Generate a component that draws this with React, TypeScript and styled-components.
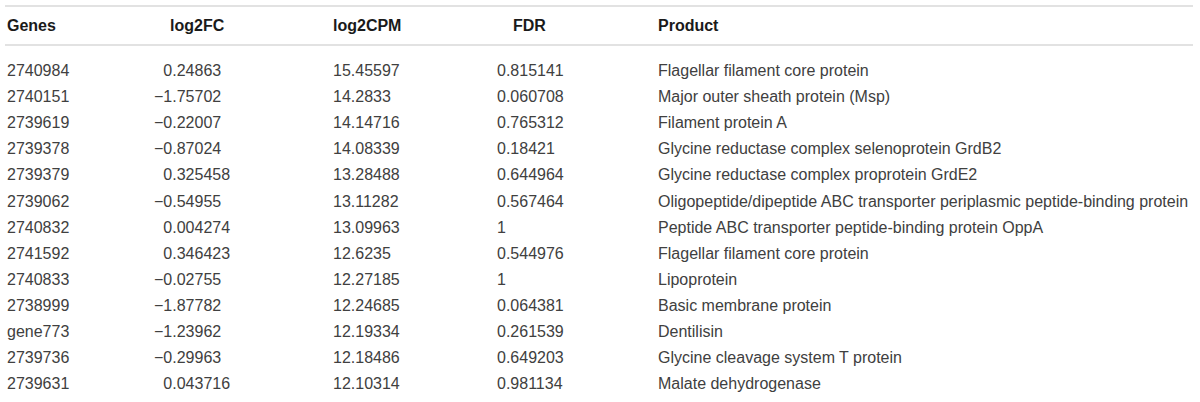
import React from "react";
import styled, { createGlobalStyle } from "styled-components";

const Global = createGlobalStyle`
  html, body { margin: 0; padding: 0; background: #fff; }
  body { font-family: "Liberation Sans", Arial, sans-serif; }
`;

const Page = styled.div`
  padding: 5px 7px 0 5px;
  width: 1188px;
`;

const cols = "135px 180px 160px 160px 1fr";

const HeaderRow = styled.div`
  display: grid;
  grid-template-columns: ${cols};
  height: 37px;
  align-items: center;
  border-top: 2px solid #e2e2e2;
  border-bottom: 2px solid #e2e2e2;
  font-weight: bold;
  font-size: 16px;
  color: #1a1a1a;
`;

const HeadCell = styled.div<{ $pl: number }>`
  padding-left: ${(p) => p.$pl}px;
  white-space: nowrap;
`;

const Body = styled.div`
  padding-top: 12px;
`;

const Row = styled.div`
  display: grid;
  grid-template-columns: ${cols};
  height: 26.1px;
  align-items: center;
  font-size: 16px;
  color: #404040;
`;

const Cell = styled.div<{ $pl: number }>`
  padding-left: ${(p) => p.$pl}px;
  white-space: nowrap;
`;

const Num = styled.span<{ $neg: boolean }>`
  display: inline-block;
  padding-left: ${(p) => (p.$neg ? "0" : "0.584em")};
`;

const data: [string, string, string, string, string][] = [
  ["2740984", "0.24863", "15.45597", "0.815141", "Flagellar filament core protein"],
  ["2740151", "\u22121.75702", "14.2833", "0.060708", "Major outer sheath protein (Msp)"],
  ["2739619", "\u22120.22007", "14.14716", "0.765312", "Filament protein A"],
  ["2739378", "\u22120.87024", "14.08339", "0.18421", "Glycine reductase complex selenoprotein GrdB2"],
  ["2739379", "0.325458", "13.28488", "0.644964", "Glycine reductase complex proprotein GrdE2"],
  ["2739062", "\u22120.54955", "13.11282", "0.567464", "Oligopeptide/dipeptide ABC transporter periplasmic peptide-binding protein"],
  ["2740832", "0.004274", "13.09963", "1", "Peptide ABC transporter peptide-binding protein OppA"],
  ["2741592", "0.346423", "12.6235", "0.544976", "Flagellar filament core protein"],
  ["2740833", "\u22120.02755", "12.27185", "1", "Lipoprotein"],
  ["2738999", "\u22121.87782", "12.24685", "0.064381", "Basic membrane protein"],
  ["gene773", "\u22121.23962", "12.19334", "0.261539", "Dentilisin"],
  ["2739736", "\u22120.29963", "12.18486", "0.649203", "Glycine cleavage system T protein"],
  ["2739631", "0.043716", "12.10314", "0.981134", "Malate dehydrogenase"],
];

export default function App() {
  return (
    <Page>
      <Global />
      <HeaderRow>
        <HeadCell $pl={2}>Genes</HeadCell>
        <HeadCell $pl={30}>log2FC</HeadCell>
        <HeadCell $pl={13}>log2CPM</HeadCell>
        <HeadCell $pl={33}>FDR</HeadCell>
        <HeadCell $pl={18}>Product</HeadCell>
      </HeaderRow>
      <Body>
        {data.map((r) => (
          <Row key={r[0] + r[1]}>
            <Cell $pl={2}>{r[0]}</Cell>
            <Cell $pl={14}>
              <Num $neg={r[1].startsWith("\u2212")}>{r[1]}</Num>
            </Cell>
            <Cell $pl={13}>{r[2]}</Cell>
            <Cell $pl={17}>{r[3]}</Cell>
            <Cell $pl={18}>{r[4]}</Cell>
          </Row>
        ))}
      </Body>
    </Page>
  );
}
